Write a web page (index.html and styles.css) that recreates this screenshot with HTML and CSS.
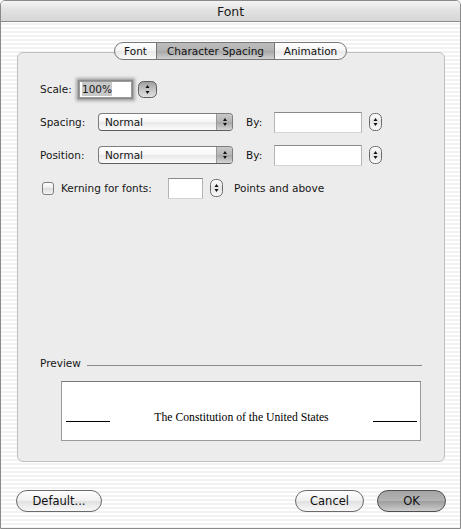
FILE: index.html
```html
<!DOCTYPE html>
<html>
<head>
<meta charset="utf-8">
<title>Font</title>
<link rel="stylesheet" href="styles.css">
</head>
<body>
<div class="window">
  <div class="titlebar">Font</div>
  <div class="content">
    <div class="tabs">
      <span class="tab tab-font">Font</span>
      <span class="tab tab-cs selected">Character Spacing</span>
      <span class="tab tab-anim">Animation</span>
    </div>
    <div class="group">
      <div class="row">
        <span class="label label-scale">Scale:</span>
        <span class="field field-scale"><span class="sel">100%</span></span>
        <svg class="stepper-big" width="19" height="17" viewBox="0 0 19 17">
          <defs><linearGradient id="gb" x1="0" y1="0" x2="0" y2="1"><stop offset="0" stop-color="#9c9c9c"/><stop offset="0.5" stop-color="#c4c4c4"/><stop offset="1" stop-color="#e2e2e2"/></linearGradient></defs>
          <rect x="0.5" y="0.5" width="18" height="16" rx="5" fill="url(#gb)" stroke="#5e5e5e"/>
          <polygon points="7.5,7 11.5,7 9.5,4" fill="#111"/>
          <polygon points="7.5,10 11.5,10 9.5,13" fill="#111"/>
        </svg>
      </div>
      <div class="row">
        <span class="label label-wide">Spacing:</span>
        <span class="popup"><span class="popup-text">Normal</span><span class="popup-cap"><svg width="14" height="16" viewBox="0 0 14 16"><polygon points="5,7 9,7 7,4" fill="#111"/><polygon points="5,9 9,9 7,12" fill="#111"/></svg></span></span>
        <span class="by">By:</span>
        <span class="field field-by"></span>
        <svg class="stepper" width="13" height="18" viewBox="0 0 13 18">
          <defs><linearGradient id="gs" x1="0" y1="0" x2="0" y2="1"><stop offset="0" stop-color="#ffffff"/><stop offset="0.5" stop-color="#e6e6e6"/><stop offset="1" stop-color="#fafafa"/></linearGradient></defs>
          <rect x="0.5" y="0.5" width="12" height="17" rx="5" fill="url(#gs)" stroke="#6a6a6a"/>
          <polygon points="4.5,8 8.5,8 6.5,5" fill="#111"/>
          <polygon points="4.5,10 8.5,10 6.5,13" fill="#111"/>
        </svg>
      </div>
      <div class="row">
        <span class="label label-wide">Position:</span>
        <span class="popup"><span class="popup-text">Normal</span><span class="popup-cap"><svg width="14" height="16" viewBox="0 0 14 16"><polygon points="5,7 9,7 7,4" fill="#111"/><polygon points="5,9 9,9 7,12" fill="#111"/></svg></span></span>
        <span class="by">By:</span>
        <span class="field field-by"></span>
        <svg class="stepper" width="13" height="18" viewBox="0 0 13 18">
          <rect x="0.5" y="0.5" width="12" height="17" rx="5" fill="url(#gs)" stroke="#6a6a6a"/>
          <polygon points="4.5,8 8.5,8 6.5,5" fill="#111"/>
          <polygon points="4.5,10 8.5,10 6.5,13" fill="#111"/>
        </svg>
      </div>
      <div class="row">
        <span class="checkbox"></span>
        <span class="label label-kern">Kerning for fonts:</span>
        <span class="field field-kern"></span>
        <svg class="stepper" width="13" height="18" viewBox="0 0 13 18">
          <rect x="0.5" y="0.5" width="12" height="17" rx="5" fill="url(#gs)" stroke="#6a6a6a"/>
          <polygon points="4.5,8 8.5,8 6.5,5" fill="#111"/>
          <polygon points="4.5,10 8.5,10 6.5,13" fill="#111"/>
        </svg>
        <span class="label label-points">Points and above</span>
      </div>
      <div class="preview">
        <div class="preview-head"><span class="label">Preview</span><span class="rule"></span></div>
        <div class="preview-box">
          <span class="pline"></span>
          <span class="ptext">The Constitution of the United States</span>
          <span class="pline"></span>
        </div>
      </div>
    </div>
    <div class="buttons">
      <span class="btn btn-default">Default...</span>
      <span class="spacer"></span>
      <span class="btn btn-cancel">Cancel</span>
      <span class="btn btn-ok">OK</span>
    </div>
  </div>
</div>
</body>
</html>
```

FILE: styles.css
```css
html, body {
  margin: 0;
  padding: 0;
  background: #ffffff;
}

body {
  font-family: "DejaVu Sans", "Noto Sans", sans-serif;
  font-size: 10.5px;
  color: #161616;
}

.window {
  width: 461px;
  height: 529px;
  box-sizing: border-box;
  border: 1px solid #8a8a8a;
  border-radius: 5px 5px 0 0;
  overflow: hidden;
  display: flex;
  flex-direction: column;
  background: repeating-linear-gradient(#ffffff 0 2px, #f2f2f2 2px 4px);
}

.titlebar {
  height: 20px;
  border-bottom: 1px solid #8c8c8c;
  background: linear-gradient(#f4f4f4, #e2e2e2 45%, #d6d6d6);
  display: flex;
  align-items: center;
  justify-content: center;
  font-size: 12.5px;
  color: #1a1a1a;
}

.content {
  flex: 1;
  display: flex;
  flex-direction: column;
}

.tabs {
  align-self: center;
  margin-top: 20px;
  margin-bottom: -8px;
  height: 18px;
  box-sizing: border-box;
  border: 1px solid #777;
  border-radius: 9px;
  overflow: hidden;
  display: flex;
  position: relative;
  z-index: 1;
  background: linear-gradient(#ffffff, #f4f4f4 50%, #e8e8e8 50%, #fafafa);
}

.tab {
  display: flex;
  align-items: center;
  justify-content: center;
  height: 16px;
  box-sizing: border-box;
  color: #111;
}

.tab-font { width: 41px; }
.tab-cs { width: 118px; border-left: 1px solid #777; }
.tab-anim { width: 72px; border-left: 1px solid #777; }

.tab.selected {
  background: linear-gradient(#bdbdbd, #b2b2b2 50%, #a6a6a6 50%, #cfcfcf);
}

.group {
  margin: 0 15px 0 16px;
  height: 410px;
  box-sizing: border-box;
  border: 1px solid #bfbfbf;
  border-radius: 6px;
  background: #ececec;
  padding: 25px 22px 20px 22px;
  display: flex;
  flex-direction: column;
}

.row {
  display: flex;
  align-items: center;
  height: 22px;
}

.row + .row {
  margin-top: 11px;
}

.label {
  white-space: nowrap;
  flex: none;
}

.label-scale { width: 39px; }
.label-wide { width: 58px; }
.label-kern { width: 107px; margin-left: 7px; }
.label-points { margin-left: 11px; }

.field {
  flex: none;
  box-sizing: border-box;
  background: #fff;
  border-top: 1px solid #8a8a8a;
  border-left: 1px solid #b4b4b4;
  border-right: 1px solid #b4b4b4;
  border-bottom: 1px solid #d4d4d4;
}

.field-scale {
  width: 53px;
  height: 17px;
  display: flex;
  align-items: center;
  padding-left: 2px;
  border-color: #9a9a9a;
  box-shadow: 0 0 1px 1px #8a8a8a, 0 0 3px 3px #a8a8a8;
}

.sel {
  background: #c8c8c8;
  line-height: 14px;
}

.stepper-big {
  margin-left: 6px;
  flex: none;
}

.stepper {
  margin-left: 7px;
  flex: none;
}

.popup {
  flex: none;
  width: 135px;
  height: 18px;
  box-sizing: border-box;
  border: 1px solid #7c7c7c;
  border-bottom-color: #5e5e5e;
  border-radius: 4px;
  overflow: hidden;
  display: flex;
  background: linear-gradient(#ffffff, #f6f6f6 50%, #e8e8e8 50%, #fbfbfb);
}

.popup-text {
  flex: 1;
  display: flex;
  align-items: center;
  padding-left: 6px;
}

.popup-cap {
  width: 15px;
  border-left: 1px solid #9a9a9a;
  display: flex;
  align-items: center;
  justify-content: center;
  background: linear-gradient(#c8c8c8, #b4b4b4 50%, #a4a4a4 50%, #d4d4d4);
}

.by {
  margin-left: 13px;
  width: 28px;
  flex: none;
}

.field-by {
  width: 88px;
  height: 21px;
}

.checkbox {
  flex: none;
  margin-left: 2px;
  width: 12px;
  height: 13px;
  box-sizing: border-box;
  border: 1px solid #7e7e7e;
  border-radius: 3px;
  background: linear-gradient(#ffffff, #ececec 50%, #dcdcdc 50%, #f6f6f6);
}

.field-kern {
  width: 35px;
  height: 21px;
}

.preview {
  margin-top: auto;
  display: flex;
  flex-direction: column;
}

.preview-head {
  height: 14px;
  display: flex;
  align-items: center;
}

.rule {
  flex: 1;
  margin-left: 6px;
  margin-top: 5px;
  border-top: 1px solid #8a8a8a;
}

.preview-box {
  margin: 11px 1px 0 21px;
  height: 60px;
  box-sizing: border-box;
  border: 1px solid #9a9a9a;
  border-top-color: #7a7a7a;
  background: #fff;
  display: flex;
  justify-content: space-between;
  align-items: flex-end;
  padding: 0 3px 15px 4px;
}

.pline {
  width: 44px;
  border-bottom: 1px solid #000;
  margin-bottom: 3px;
}

.ptext {
  font-family: "Liberation Serif", "Times New Roman", serif;
  font-size: 11.7px;
  color: #000;
  line-height: 14px;
}

.buttons {
  margin-top: 28px;
  height: 22px;
  padding: 0 14px 0 15px;
  display: flex;
  gap: 13px;
}

.spacer {
  flex: 1;
}

.btn {
  flex: none;
  height: 22px;
  box-sizing: border-box;
  border: 1px solid #6a6a6a;
  border-radius: 11px;
  display: flex;
  align-items: center;
  justify-content: center;
  font-size: 11.5px;
  color: #111;
  background: linear-gradient(#ffffff, #f0f0f0 50%, #e0e0e0 50%, #f8f8f8);
}

.btn-default { width: 86px; }
.btn-cancel { width: 69px; }
.btn-ok {
  width: 69px;
  border-color: #4e4e4e;
  background: linear-gradient(#a4a4a4, #b4b4b4 50%, #9c9c9c 50%, #cccccc);
}
```
